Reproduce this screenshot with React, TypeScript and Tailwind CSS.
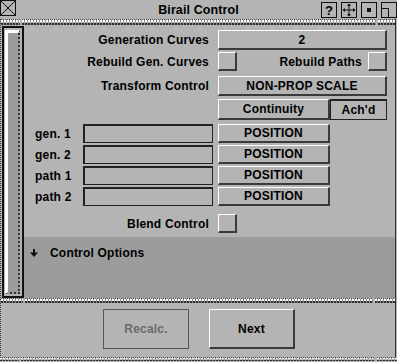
import React from "react";

const raised =
  "border-t border-l border-t-white border-l-white border-b-2 border-r-2 border-b-[#3a3a3a] border-r-[#3a3a3a]";

function Groove({ gaps, h = 6 }: { gaps: number[]; h?: number }) {
  // dithered etched line, split into segments at the given x positions
  const segs: number[] = [];
  let prev = 0;
  gaps.forEach((g) => {
    segs.push(g - prev);
    prev = g + 2;
  });
  const lines = (
    <>
      <div className="h-px bg-[image:repeating-linear-gradient(90deg,#555_0_1px,transparent_1px_2px)]" />
      <div className="h-[2px] bg-[image:repeating-linear-gradient(90deg,#fff_0_2px,#8a8a8a_2px_3px)]" />
      <div className="h-px" />
      <div className="h-[2px] bg-[image:repeating-linear-gradient(90deg,#2e2e2e_0_2px,#8a8a8a_2px_3px)]" />
    </>
  );
  return (
    <div className="flex w-full gap-[2px]" style={{ height: h }}>
      {segs.map((w, i) => (
        <div key={i} className="flex flex-col" style={{ width: w }}>
          {lines}
        </div>
      ))}
      <div className="flex flex-1 flex-col">{lines}</div>
    </div>
  );
}

function TitleBar() {
  return (
    <div className="grid h-[19px] grid-cols-[1fr_auto_1fr] items-start">
      <div>
        <svg width="16" height="16" viewBox="0 0 16 16" className="block">
          <rect x="0.5" y="0.5" width="15" height="15" fill="none" stroke="#111" />
          <path d="M1 1L15 15M15 1L1 15" stroke="#111" strokeWidth="1" />
        </svg>
      </div>
      <div className="pt-[3px] text-[12.5px] leading-[14px] tracking-[0.1px]">Birail Control</div>
      <div className="flex justify-end gap-[4px] pt-[2px]">
        <div className="flex h-[16px] w-[16px] items-center justify-center border border-[#111] text-[13px] leading-none">
          ?
        </div>
        <svg width="16" height="16" viewBox="0 0 16 16" className="block">
          <rect x="0.5" y="0.5" width="15" height="15" fill="none" stroke="#111" />
          <path d="M8 2V14M2 8H14" stroke="#111" />
          <path d="M8 1.5L6 4H10ZM8 14.5L6 12H10ZM1.5 8L4 6V10ZM14.5 8L12 6V10Z" fill="#111" />
        </svg>
        <svg width="16" height="16" viewBox="0 0 16 16" className="block">
          <rect x="0.5" y="0.5" width="15" height="15" fill="none" stroke="#111" />
          <rect x="6" y="6" width="4" height="4" fill="#111" />
        </svg>
        <svg width="16" height="16" viewBox="0 0 16 16" className="block">
          <rect x="0.5" y="0.5" width="15" height="15" fill="none" stroke="#111" />
          <path d="M1 6.5H7.5V15" fill="none" stroke="#111" />
        </svg>
      </div>
    </div>
  );
}

function Check() {
  return <div className={`h-[19px] w-[19px] ${raised}`} />;
}

function Label({ children }: { children: React.ReactNode }) {
  return <div className="w-[185px] shrink-0 text-right">{children}</div>;
}

function CurveRow({ name }: { name: string }) {
  return (
    <div className="mt-[2px] flex h-[19px] items-center first:mt-[4px]">
      <div className="w-[59px] shrink-0 pl-[11px]">{name}</div>
      <div className="h-[19px] w-[130px] border border-[#222] border-t-2 border-l-2" />
      <div
        className={`ml-[5px] flex h-[19px] w-[112px] items-center justify-center ${raised}`}
      >
        POSITION
      </div>
    </div>
  );
}

export default function App() {
  return (
    <div className="flex h-[362px] w-[397px] flex-col overflow-hidden bg-[#b4b4b4] font-['Liberation_Sans',Arial,sans-serif] text-[12px] font-bold leading-[14px] tracking-[0.2px] text-black">
      <TitleBar />
      <div className="flex h-[338px]">
        <div className="w-px bg-[image:repeating-linear-gradient(180deg,#333_0_1px,transparent_1px_2px)]" />
        <div className="flex w-[394px] flex-col">
          <Groove gaps={[19, 375]} />
          <div className="flex h-[273px]">
            <div className="ml-[1px] mt-[1px] flex w-[22px] border-2 border-[#111] bg-[#b4b4b4] py-[2px] pl-[1px]">
              <div className="w-[15px] border-l-[3px] border-t-[3px] border-b-2 border-r-2 border-l-white border-t-white border-b-[#333] border-r-[#333] bg-[#9c9c9c] [border-bottom-style:dotted] [border-right-style:dotted]" />
            </div>
            <div className="flex flex-1 flex-col">
              <div className="flex h-[212px] flex-col">
                <div className="mt-[5px] flex h-[20px] items-center">
                  <Label>Generation Curves</Label>
                  <div
                    className={`ml-[9px] flex h-[20px] w-[169px] items-center justify-center ${raised}`}
                  >
                    2
                  </div>
                </div>
                <div className="mt-[2px] flex h-[19px] items-center">
                  <Label>Rebuild Gen. Curves</Label>
                  <div className="ml-[9px]">
                    <Check />
                  </div>
                  <div className="flex-1 pr-[6px] text-right">Rebuild Paths</div>
                  <div className="mr-[8px]">
                    <Check />
                  </div>
                </div>
                <div className="mt-[5px] flex h-[20px] items-center">
                  <Label>Transform Control</Label>
                  <div
                    className={`ml-[9px] flex h-[20px] w-[169px] items-center justify-center ${raised}`}
                  >
                    NON-PROP SCALE
                  </div>
                </div>
                <div className="mt-[3px] flex h-[21px] items-center pl-[194px]">
                  <div
                    className={`flex h-[21px] w-[112px] items-center justify-center ${raised}`}
                  >
                    Continuity
                  </div>
                  <div className="flex h-[21px] w-[57px] items-center justify-center border border-t-2 border-[#222]">
                    Ach'd
                  </div>
                </div>
                <div className="flex flex-col">
                  <CurveRow name="gen. 1" />
                  <CurveRow name="gen. 2" />
                  <CurveRow name="path 1" />
                  <CurveRow name="path 2" />
                </div>
                <div className="mt-[8px] flex h-[19px] items-center">
                  <Label>Blend Control</Label>
                  <div className="ml-[9px]">
                    <Check />
                  </div>
                </div>
              </div>
              <div className="flex flex-1 items-start bg-[#9c9c9c] pt-[9px]">
                <svg width="8" height="8" viewBox="0 0 8 8" className="ml-[6px] mt-[3px] block">
                  <path d="M3 0H5V4H3Z" fill="#111" />
                  <path d="M0 3.5H8L4 8Z" fill="#111" />
                </svg>
                <div className="ml-[12px]">Control Options</div>
              </div>
            </div>
          </div>
          <Groove gaps={[22, 372]} h={5} />
          <div className="flex flex-1 items-start pt-[6px]">
            <div className="ml-[102px] flex h-[40px] w-[86px] items-center justify-center border border-[#555] text-[#6a6a6a]">
              Recalc.
            </div>
            <div
              className={`ml-[20px] flex h-[40px] w-[86px] items-center justify-center ${raised}`}
            >
              Next
            </div>
          </div>
        </div>
        <div className="w-px bg-[#333]" />
        <div className="w-px" />
      </div>
      <Groove gaps={[19, 375]} h={4} />
    </div>
  );
}
